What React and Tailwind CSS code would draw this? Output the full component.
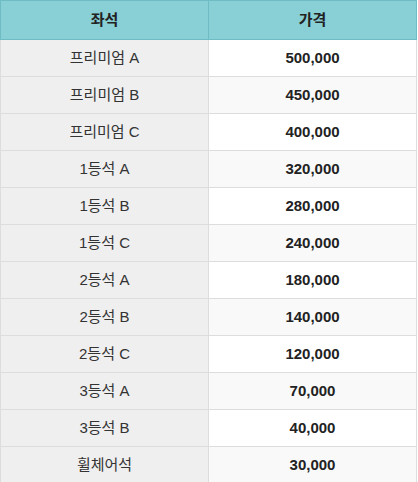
export default function App() {
  const rows = [
    ["프리미엄 A", "500,000"],
    ["프리미엄 B", "450,000"],
    ["프리미엄 C", "400,000"],
    ["1등석 A", "320,000"],
    ["1등석 B", "280,000"],
    ["1등석 C", "240,000"],
    ["2등석 A", "180,000"],
    ["2등석 B", "140,000"],
    ["2등석 C", "120,000"],
    ["3등석 A", "70,000"],
    ["3등석 B", "40,000"],
    ["휠체어석", "30,000"],
  ];
  return (
    <div className="w-[417px] bg-white" style={{ fontFamily: '"Liberation Sans", Arial, "Noto Sans CJK KR", sans-serif' }}>
      <table className="w-[417px] border-collapse table-fixed text-[15px] leading-[18px]">
        <thead>
          <tr className="bg-[#88cfd6]">
            <th className="h-[39px] p-0 w-[208px] border border-[#6fbcc4] text-[#222] font-bold text-center">좌석</th>
            <th className="h-[39px] p-0 border border-[#6fbcc4] text-[#222] font-bold text-center">가격</th>
          </tr>
        </thead>
        <tbody>
          {rows.map(([seat, price], i) => (
            <tr key={i}>
              <td className="h-[37px] p-0 border border-[#dddddd] bg-[#efefef] text-[#333] text-center">{seat}</td>
              <td className={`h-[37px] p-0 border border-[#dddddd] text-[#222] font-bold text-center ${i % 2 === 0 ? "bg-white" : "bg-[#f9f9f9]"}`}>{price}</td>
            </tr>
          ))}
        </tbody>
      </table>
    </div>
  );
}
